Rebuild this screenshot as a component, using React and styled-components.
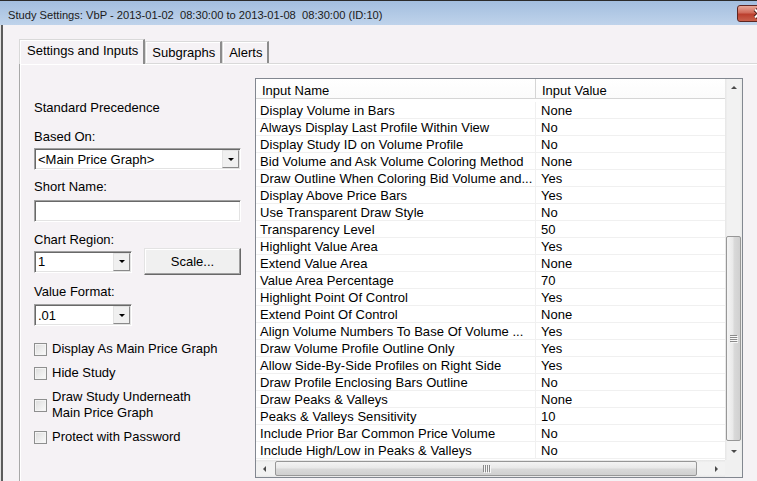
import styled, { createGlobalStyle } from "styled-components";

const GlobalStyle = createGlobalStyle`
  html, body {
    margin: 0;
    padding: 0;
    background: #f5f2f5;
  }
  body {
    font-family: "Liberation Sans", Arial, sans-serif;
    font-size: 13px;
    color: #000;
  }
`;

const Window = styled.div`
  width: 757px;
  height: 481px;
  overflow: hidden;
  display: flex;
  flex-direction: column;
  background: #f5f2f5;
`;

const TitleBar = styled.div`
  flex: none;
  height: 25px;
  box-sizing: border-box;
  display: flex;
  align-items: center;
  justify-content: space-between;
  padding-left: 8px;
  border-top: 1px solid #2b2b2b;
  background: linear-gradient(#a3bedf, #bfd3eb);
`;

const Title = styled.span`
  font-size: 11.15px;
  color: #1b1b1b;
  white-space: pre;
  padding-top: 3px;
`;

const CloseButton = styled.div`
  flex: none;
  width: 43px;
  height: 17px;
  margin-right: -23px;
  box-sizing: border-box;
  border: 1px solid #5e2622;
  border-radius: 3px;
  background: linear-gradient(#e8a898, #d06a5a 45%, #bb3f2e 55%, #c9604c);
  display: flex;
  align-items: center;
  justify-content: center;
`;

const Body = styled.div`
  flex: 1;
  display: flex;
  flex-direction: column;
  padding: 14px 0 0 19px;
  box-shadow: inset 1px 0 0 #e2e2e2, inset 3px 0 0 #5c5c5c;
`;

const TabStrip = styled.div`
  flex: none;
  height: 24px;
  display: flex;
  align-items: flex-end;
`;

const Tab = styled.div`
  position: relative;
  z-index: ${(p) => (p.$active ? 1 : 0)};
  height: ${(p) => (p.$active ? "25px" : "22px")};
  margin-bottom: ${(p) => (p.$active ? "-1px" : "0")};
  padding: ${(p) => (p.$active ? "0 5px 3px 7px" : "0 5px 0 6px")};
  box-sizing: border-box;
  display: flex;
  align-items: center;
  background: #f5f2f5;
  border-top: 1px solid #d9d9d9;
  border-left: 1px solid #d9d9d9;
  border-right: 2px solid #8c8c8c;
  box-shadow: inset 1px 1px 0 #ffffff;
  white-space: nowrap;
`;

const Panel = styled.div`
  flex: 1;
  display: flex;
  gap: 14px;
  padding: 14px 0 0 14px;
  width: 760px;
  border-top: 1px solid #d9d9d9;
  border-left: 1px solid #a8a8a8;
  box-shadow: inset 1px 1px 0 #ffffff;
`;

const LeftColumn = styled.div`
  flex: none;
  width: 207px;
  display: flex;
  flex-direction: column;
  padding-top: 22px;
`;

const Label = styled.div`
  line-height: 16px;
  margin-top: ${(p) => p.$mt || 0}px;
  white-space: nowrap;
`;

const Sunken = styled.div`
  width: ${(p) => p.$width}px;
  height: 22px;
  margin-top: ${(p) => p.$mt || 0}px;
  box-sizing: border-box;
  display: flex;
  align-items: center;
  background: #fff;
  border-top: 1px solid #a0a0a0;
  border-left: 1px solid #a0a0a0;
  border-bottom: 1px solid #ffffff;
  border-right: 1px solid #ffffff;
  box-shadow: inset 1px 1px 0 #696969, inset -1px -1px 0 #e3e3e3;
`;

const SelectText = styled.span`
  flex: 1;
  padding-left: 3px;
  white-space: nowrap;
`;

const DropButton = styled.div`
  width: 17px;
  height: 18px;
  margin-right: 1px;
  box-sizing: border-box;
  display: flex;
  align-items: center;
  justify-content: center;
  background: #f0f0f0;
  border-top: 1px solid #e3e3e3;
  border-left: 1px solid #e3e3e3;
  border-right: 1px solid #8a8a8a;
  border-bottom: 1px solid #8a8a8a;
`;

const Arrow = styled.span`
  width: 0;
  height: 0;
  border-style: solid;
  border-color: transparent;
  ${(p) =>
    p.$dir === "down" &&
    `border-width: ${p.$size}px ${p.$size}px 0; border-top-color: ${p.$color};`}
  ${(p) =>
    p.$dir === "up" &&
    `border-width: 0 ${p.$size}px ${p.$size}px; border-bottom-color: ${p.$color};`}
  ${(p) =>
    p.$dir === "left" &&
    `border-width: ${p.$size}px ${p.$size}px ${p.$size}px 0; border-right-color: ${p.$color};`}
  ${(p) =>
    p.$dir === "right" &&
    `border-width: ${p.$size}px 0 ${p.$size}px ${p.$size}px; border-left-color: ${p.$color};`}
`;

const ControlRow = styled.div`
  display: flex;
  align-items: center;
  justify-content: space-between;
  height: 27px;
`;

const PushButton = styled.div`
  width: 97px;
  height: 27px;
  box-sizing: border-box;
  display: flex;
  align-items: center;
  justify-content: center;
  background: #f0f0f0;
  border-top: 1px solid #e3e3e3;
  border-left: 1px solid #e3e3e3;
  border-right: 1px solid #696969;
  border-bottom: 1px solid #696969;
  box-shadow: inset -1px -1px 0 #a0a0a0, inset 1px 1px 0 #ffffff;
`;

const CheckList = styled.div`
  display: flex;
  flex-direction: column;
  gap: 8px;
  margin-top: 15px;
`;

const CheckRow = styled.div`
  display: flex;
  align-items: center;
  gap: 5px;
  line-height: 16px;
`;

const CheckBox = styled.span`
  flex: none;
  width: 13px;
  height: 13px;
  box-sizing: border-box;
  border: 1px solid #8e8f8f;
  background: linear-gradient(135deg, #dcdcdc, #fbfbfb);
  box-shadow: inset 0 0 0 1px #f4f4f4;
`;

const ListView = styled.div`
  flex: none;
  width: 488px;
  height: 400px;
  box-sizing: border-box;
  border: 1px solid #828790;
  background: #fff;
  display: grid;
  grid-template-columns: 1fr 17px;
  grid-template-rows: 1fr 17px;
`;

const ListArea = styled.div`
  overflow: hidden;
  display: flex;
  flex-direction: column;
`;

const HeaderRow = styled.div`
  flex: none;
  height: 20px;
  box-sizing: border-box;
  display: grid;
  grid-template-columns: 280px 1fr;
  border-bottom: 1px solid #d5d5d5;
  background: linear-gradient(#ffffff, #fbfbfb);
`;

const HeaderCell = styled.div`
  padding-left: 6px;
  line-height: 23px;
  height: 19px;
  overflow: hidden;
  border-right: ${(p) => (p.$divider ? "1px solid #d5d5d5" : "none")};
  white-space: nowrap;
`;

const Rows = styled.div`
  padding-top: 3px;
`;

const Row = styled.div`
  height: 17px;
  box-sizing: border-box;
  display: grid;
  grid-template-columns: 280px 1fr;
  border-bottom: 1px solid #f0f0f0;
`;

const Cell = styled.div`
  padding: 1px 0 0 ${(p) => (p.$first ? 4 : 5)}px;
  line-height: 16px;
  height: 16px;
  box-sizing: border-box;
  white-space: nowrap;
  overflow: hidden;
  letter-spacing: 0.05px;
  border-right: ${(p) => (p.$first ? "1px solid #f0f0f0" : "none")};
`;

const VScroll = styled.div`
  display: flex;
  flex-direction: column;
  background: linear-gradient(to right, #e6e6e6, #f2f2f2 15%, #f2f2f2 85%, #e9e9e9);
`;

const HScroll = styled.div`
  display: flex;
  background: linear-gradient(#e6e6e6, #f2f2f2 15%, #f2f2f2 85%, #e9e9e9);
`;

const ScrollButton = styled.div`
  flex: none;
  width: 17px;
  height: 17px;
  display: flex;
  align-items: center;
  justify-content: center;
`;

const VTrack = styled.div`
  flex: 1;
  display: flex;
  flex-direction: column;
`;

const HTrack = styled.div`
  flex: 1;
  display: flex;
`;

const Thumb = styled.div`
  box-sizing: border-box;
  border: 1px solid #979797;
  border-radius: 2px;
  display: flex;
  flex-direction: column;
  align-items: center;
  justify-content: center;
  gap: 1px;
  ${(p) =>
    p.$vertical
      ? `width: 15px; height: ${p.$length}px; margin: ${p.$offset}px 0 0 1px;
         background: linear-gradient(to right, #f4f4f4, #e9e9e9 45%, #d9d9d9 55%, #d0d0d0);`
      : `height: 15px; width: ${p.$length}px; margin: 1px 0 0 ${p.$offset}px;
         background: linear-gradient(#f4f4f4, #e9e9e9 45%, #d9d9d9 55%, #d0d0d0);
         flex-direction: row;`}
`;

const GripLine = styled.span`
  background: #8a8a8a;
  box-shadow: 1px 1px 0 #f8f8f8;
  ${(p) => (p.$vertical ? "width: 7px; height: 1px;" : "width: 1px; height: 7px;")}
`;

const Corner = styled.div`
  background: #f0f0f0;
`;

const rows = [
  ["Display Volume in Bars", "None"],
  ["Always Display Last Profile Within View", "No"],
  ["Display Study ID on Volume Profile", "No"],
  ["Bid Volume and Ask Volume Coloring Method", "None"],
  ["Draw Outline When Coloring Bid Volume and...", "Yes"],
  ["Display Above Price Bars", "Yes"],
  ["Use Transparent Draw Style", "No"],
  ["Transparency Level", "50"],
  ["Highlight Value Area", "Yes"],
  ["Extend Value Area", "None"],
  ["Value Area Percentage", "70"],
  ["Highlight Point Of Control", "Yes"],
  ["Extend Point Of Control", "None"],
  ["Align Volume Numbers To Base Of Volume ...", "Yes"],
  ["Draw Volume Profile Outline Only", "Yes"],
  ["Allow Side-By-Side Profiles on Right Side", "Yes"],
  ["Draw Profile Enclosing Bars Outline", "No"],
  ["Draw Peaks & Valleys", "None"],
  ["Peaks & Valleys Sensitivity", "10"],
  ["Include Prior Bar Common Price Volume", "No"],
  ["Include High/Low in Peaks & Valleys", "No"],
];

const checks = [
  ["Display As Main Price Graph"],
  ["Hide Study"],
  ["Draw Study Underneath", "Main Price Graph"],
  ["Protect with Password"],
];

function Select({ width, mt, value }) {
  return (
    <Sunken $width={width} $mt={mt}>
      <SelectText>{value}</SelectText>
      <DropButton>
        <Arrow $dir="down" $size={3.5} $color="#000" />
      </DropButton>
    </Sunken>
  );
}

function Grip({ vertical }) {
  return (
    <>
      {[0, 1, 2, 3].map((i) => (
        <GripLine key={i} $vertical={vertical} />
      ))}
    </>
  );
}

export default function App() {
  return (
    <>
      <GlobalStyle />
      <Window>
        <TitleBar>
          <Title>
            Study Settings: VbP - 2013-01-02  08:30:00 to 2013-01-08  08:30:00 (ID:10)
          </Title>
          <CloseButton>
            <svg width="12" height="11" viewBox="0 0 12 11">
              <path d="M2 1.5 L10 9.5 M10 1.5 L2 9.5" stroke="#4a1a16" strokeWidth="4" />
              <path d="M2 1.5 L10 9.5 M10 1.5 L2 9.5" stroke="#fff" strokeWidth="2" />
            </svg>
          </CloseButton>
        </TitleBar>

        <Body>
          <TabStrip>
            <Tab $active>Settings and Inputs</Tab>
            <Tab>Subgraphs</Tab>
            <Tab>Alerts</Tab>
          </TabStrip>

          <Panel>
            <LeftColumn>
              <Label>Standard Precedence</Label>
              <Label $mt={13}>Based On:</Label>
              <Select width={207} mt={3} value="<Main Price Graph>" />
              <Label $mt={9}>Short Name:</Label>
              <Sunken $width={207} $mt={5} />
              <Label $mt={10}>Chart Region:</Label>
              <ControlRow>
                <Select width={98} value="1" />
                <PushButton>Scale...</PushButton>
              </ControlRow>
              <Label $mt={9}>Value Format:</Label>
              <Select width={98} mt={4} value=".01" />
              <CheckList>
                {checks.map((lines) => (
                  <CheckRow key={lines[0]}>
                    <CheckBox />
                    <div>
                      {lines.map((l) => (
                        <div key={l}>{l}</div>
                      ))}
                    </div>
                  </CheckRow>
                ))}
              </CheckList>
            </LeftColumn>

            <ListView>
              <ListArea>
                <HeaderRow>
                  <HeaderCell $divider>Input Name</HeaderCell>
                  <HeaderCell>Input Value</HeaderCell>
                </HeaderRow>
                <Rows>
                  {rows.map(([name, value]) => (
                    <Row key={name}>
                      <Cell $first>{name}</Cell>
                      <Cell>{value}</Cell>
                    </Row>
                  ))}
                </Rows>
              </ListArea>

              <VScroll>
                <ScrollButton>
                  <Arrow $dir="up" $size={3.5} $color="#4a4a4a" />
                </ScrollButton>
                <VTrack>
                  <Thumb $vertical $length={205} $offset={140}>
                    <Grip vertical />
                  </Thumb>
                </VTrack>
                <ScrollButton>
                  <Arrow $dir="down" $size={3.5} $color="#4a4a4a" />
                </ScrollButton>
              </VScroll>

              <HScroll>
                <ScrollButton>
                  <Arrow $dir="left" $size={3.5} $color="#4a4a4a" />
                </ScrollButton>
                <HTrack>
                  <Thumb $length={422} $offset={2}>
                    <Grip />
                  </Thumb>
                </HTrack>
                <ScrollButton>
                  <Arrow $dir="right" $size={3.5} $color="#4a4a4a" />
                </ScrollButton>
              </HScroll>
              <Corner />
            </ListView>
          </Panel>
        </Body>
      </Window>
    </>
  );
}
